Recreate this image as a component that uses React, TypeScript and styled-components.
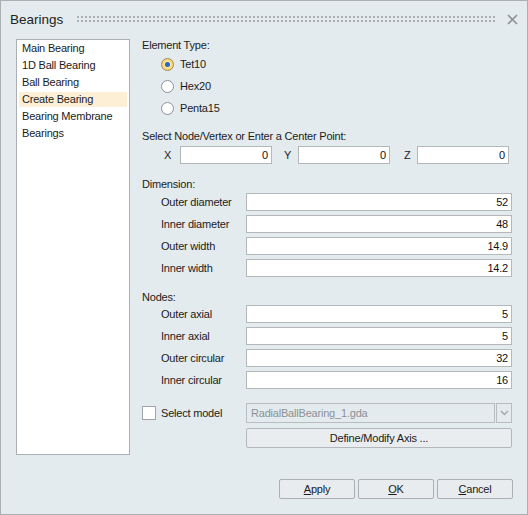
import React from "react";
import styled, { createGlobalStyle } from "styled-components";

const Global = createGlobalStyle`
  html, body { margin: 0; padding: 0; background: #e4ebee; }
  * { box-sizing: border-box; }
  body { font-family: "Liberation Sans", Arial, sans-serif; font-size: 11px; color: #1b1b1b; }
`;

const Window = styled.div`
  width: 528px;
  height: 515px;
  border: 1px solid #a9afb3;
  background: #e4ebee;
  display: flex;
  flex-direction: column;
  letter-spacing: -0.2px;
`;

const TitleBar = styled.div`
  height: 36px;
  display: flex;
  align-items: center;
  padding: 0 9px 0 9px;
`;

const Title = styled.div`
  font-size: 13.5px;
  letter-spacing: 0;
  color: #222;
`;

const Grip = styled.div`
  flex: 1;
  height: 6px;
  margin: 0 10px 0 14px;
  background-image: linear-gradient(90deg, #aab0b3 2px, transparent 2px),
    linear-gradient(90deg, #aab0b3 2px, transparent 2px);
  background-size: 4px 2px, 4px 2px;
  background-repeat: repeat-x, repeat-x;
  background-position: 0 0, 0 4px;
`;

const CloseBtn = styled.div`
  width: 11px;
  height: 11px;
  display: flex;
  svg { display: block; }
`;

const Body = styled.div`
  flex: 1;
  display: flex;
  align-items: flex-start;
  padding: 2px 15px 0 15px;
  gap: 12px;
`;

const List = styled.div`
  width: 114px;
  height: 416px;
  background: #fff;
  border: 1px solid #aab0b4;
  padding: 1px 2px 0 2px;
  display: flex;
  flex-direction: column;
  gap: 2px;
`;

const ListItem = styled.div<{ $sel?: boolean }>`
  height: 15px;
  line-height: 15px;
  padding-left: 3px;
  background: ${(p) => (p.$sel ? "#fcefd6" : "transparent")};
  white-space: nowrap;
`;

const Panel = styled.div`
  flex: 1;
  display: flex;
  flex-direction: column;
`;

const SectionLabel = styled.div<{ $mt?: number }>`
  height: 13px;
  line-height: 13px;
  margin-top: ${(p) => p.$mt ?? 0}px;
  white-space: nowrap;
`;

const RadioGroup = styled.div`
  display: flex;
  flex-direction: column;
  padding-left: 19px;
  margin-top: 1px;
`;

const RadioRow = styled.div`
  height: 22px;
  display: flex;
  align-items: center;
  gap: 6px;
`;

const RadioDot = styled.span<{ $on?: boolean }>`
  width: 13px;
  height: 13px;
  border-radius: 50%;
  border: 1px solid ${(p) => (p.$on ? "#a08a52" : "#8c9296")};
  background: ${(p) => (p.$on ? "radial-gradient(circle, #fff3bf 0%, #f3c852 100%)" : "#fff")};
  display: flex;
  align-items: center;
  justify-content: center;
  &::after {
    content: "";
    display: ${(p) => (p.$on ? "block" : "none")};
    width: 5px;
    height: 5px;
    border-radius: 50%;
    background: #2469cf;
  }
`;

const AxisRow = styled.div`
  margin-top: 3px;
  height: 18px;
  display: flex;
  align-items: center;
`;

const AxisLabel = styled.span<{ $lead: number; $w: number }>`
  margin-left: ${(p) => p.$lead}px;
  width: ${(p) => p.$w}px;
  flex: none;
`;

const Field = styled.div<{ $w?: number }>`
  height: 18px;
  ${(p) => (p.$w ? `width: ${p.$w}px; flex: none;` : "flex: 1;")}
  background: #fff;
  border: 1px solid #b3b8bb;
  text-align: right;
  padding-right: 3px;
  line-height: 16px;
  color: #111;
`;

const Rows = styled.div<{ $mt: number }>`
  margin-top: ${(p) => p.$mt}px;
  display: flex;
  flex-direction: column;
  gap: 4px;
`;

const Row = styled.div`
  height: 18px;
  display: flex;
  align-items: center;
`;

const RowLabel = styled.span`
  width: 104px;
  padding-left: 19px;
  flex: none;
  white-space: nowrap;
`;

const ModelRow = styled.div`
  margin-top: 14px;
  height: 20px;
  display: flex;
  align-items: center;
`;

const CheckBox = styled.span`
  width: 14px;
  height: 14px;
  background: #fff;
  border: 1px solid #9ea4a8;
  flex: none;
`;

const CheckLabel = styled.span`
  margin-left: 5px;
  width: 85px;
  flex: none;
`;

const Combo = styled.div`
  flex: 1;
  height: 20px;
  display: flex;
`;

const ComboText = styled.div`
  flex: 1;
  border: 1px solid #b9bdc0;
  line-height: 18px;
  padding-left: 4px;
  color: #8c9194;
`;

const ComboArrow = styled.div`
  width: 16px;
  border: 1px solid #b9bdc0;
  margin-left: 1px;
  display: flex;
  align-items: center;
  justify-content: center;
`;

const WideButton = styled.div`
  margin-top: 5px;
  margin-left: 104px;
  height: 20px;
  border: 1px solid #b3b8bb;
  border-radius: 2px;
  background: #e9edf0;
  display: flex;
  align-items: center;
  justify-content: center;
`;

const Footer = styled.div`
  height: 35px;
  display: flex;
  justify-content: flex-end;
  align-items: flex-start;
  gap: 3px;
  padding: 0 14px 15px 0;
`;

const Button = styled.div`
  width: 76px;
  height: 20px;
  border: 1px solid #abb0b4;
  border-radius: 2px;
  background: #e8ecef;
  display: flex;
  align-items: center;
  justify-content: center;
  u { text-decoration: underline; text-underline-offset: 1px; }
`;

const items = ["Main Bearing", "1D Ball Bearing", "Ball Bearing", "Create Bearing", "Bearing Membrane", "Bearings"];
const dims: [string, string][] = [
  ["Outer diameter", "52"],
  ["Inner diameter", "48"],
  ["Outer width", "14.9"],
  ["Inner width", "14.2"],
];
const nodes: [string, string][] = [
  ["Outer axial", "5"],
  ["Inner axial", "5"],
  ["Outer circular", "32"],
  ["Inner circular", "16"],
];

export default function App() {
  return (
    <>
      <Global />
      <Window>
        <TitleBar>
          <Title>Bearings</Title>
          <Grip />
          <CloseBtn>
            <svg width="11" height="11" viewBox="0 0 11 11">
              <path d="M1 1 L10 10 M10 1 L1 10" stroke="#8e9397" strokeWidth="1.7" />
            </svg>
          </CloseBtn>
        </TitleBar>
        <Body>
          <List>
            {items.map((it) => (
              <ListItem key={it} $sel={it === "Create Bearing"}>
                {it}
              </ListItem>
            ))}
          </List>
          <Panel>
            <SectionLabel>Element Type:</SectionLabel>
            <RadioGroup>
              <RadioRow>
                <RadioDot $on />
                Tet10
              </RadioRow>
              <RadioRow>
                <RadioDot />
                Hex20
              </RadioRow>
              <RadioRow>
                <RadioDot />
                Penta15
              </RadioRow>
            </RadioGroup>
            <SectionLabel $mt={11}>Select Node/Vertex or Enter a Center Point:</SectionLabel>
            <AxisRow>
              <AxisLabel $lead={22} $w={16}>X</AxisLabel>
              <Field $w={92}>0</Field>
              <AxisLabel $lead={12} $w={14}>Y</AxisLabel>
              <Field $w={92}>0</Field>
              <AxisLabel $lead={14} $w={13}>Z</AxisLabel>
              <Field $w={92}>0</Field>
            </AxisRow>
            <SectionLabel $mt={14}>Dimension:</SectionLabel>
            <Rows $mt={2}>
              {dims.map(([l, v]) => (
                <Row key={l}>
                  <RowLabel>{l}</RowLabel>
                  <Field>{v}</Field>
                </Row>
              ))}
            </Rows>
            <SectionLabel $mt={14}>Nodes:</SectionLabel>
            <Rows $mt={1}>
              {nodes.map(([l, v]) => (
                <Row key={l}>
                  <RowLabel>{l}</RowLabel>
                  <Field>{v}</Field>
                </Row>
              ))}
            </Rows>
            <ModelRow>
              <CheckBox />
              <CheckLabel>Select model</CheckLabel>
              <Combo>
                <ComboText>RadialBallBearing_1.gda</ComboText>
                <ComboArrow>
                  <svg width="9" height="6" viewBox="0 0 9 6">
                    <path d="M1 1 L4.5 4.5 L8 1" stroke="#a3a8ab" strokeWidth="1.5" fill="none" />
                  </svg>
                </ComboArrow>
              </Combo>
            </ModelRow>
            <WideButton>Define/Modify Axis ...</WideButton>
          </Panel>
        </Body>
        <Footer>
          <Button>
            <span><u>A</u>pply</span>
          </Button>
          <Button>
            <span><u>O</u>K</span>
          </Button>
          <Button>
            <span><u>C</u>ancel</span>
          </Button>
        </Footer>
      </Window>
    </>
  );
}
